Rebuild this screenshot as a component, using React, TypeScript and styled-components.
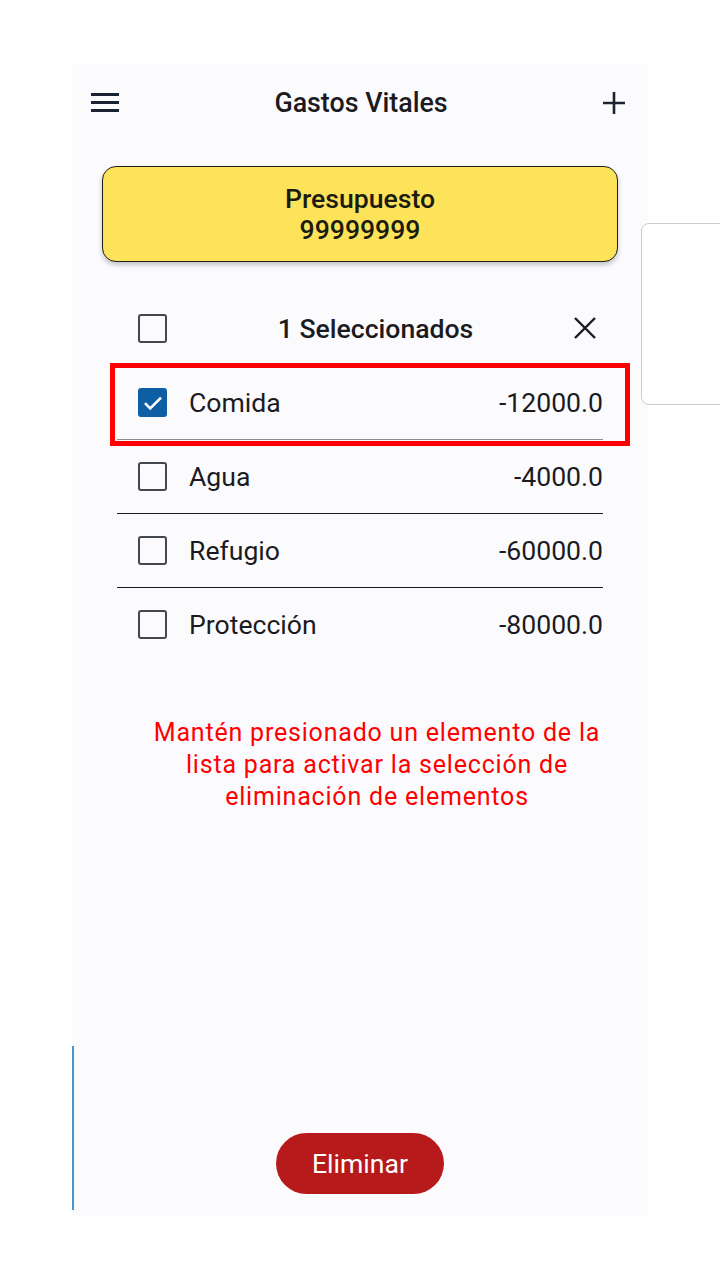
import React, { useState } from 'react';
import styled, { createGlobalStyle } from 'styled-components';

const GlobalStyle = createGlobalStyle`
  html, body {
    margin: 0;
    padding: 0;
    background: #ffffff;
  }
  body {
    font-family: Roboto, "Liberation Sans", sans-serif;
    color: #1b1b1f;
  }
`;

interface Gasto {
  id: number;
  nombre: string;
  monto: string;
}

const GASTOS: Gasto[] = [
  { id: 1, nombre: 'Comida', monto: '-12000.0' },
  { id: 2, nombre: 'Agua', monto: '-4000.0' },
  { id: 3, nombre: 'Refugio', monto: '-60000.0' },
  { id: 4, nombre: 'Protección', monto: '-80000.0' },
];

export default function App() {
  const [selected, setSelected] = useState<number[]>([1]);

  const toggle = (id: number) =>
    setSelected((prev) => (prev.includes(id) ? prev.filter((x) => x !== id) : [...prev, id]));

  return (
    <>
      <GlobalStyle />
      <Page>
        <Screen>
          <TopBar>
            <IconBtn aria-label="menu">
              <svg width="28" height="22" viewBox="0 0 28 22">
                <path d="M0 2.5h28M0 10.5h28M0 18.5h28" stroke="#1a2331" strokeWidth="3" />
              </svg>
            </IconBtn>
            <Title>Gastos Vitales</Title>
            <IconBtn aria-label="agregar">
              <svg width="22" height="22" viewBox="0 0 22 22">
                <path d="M11 0v22M0 11h22" stroke="#1a2331" strokeWidth="2.6" />
              </svg>
            </IconBtn>
          </TopBar>

          <BudgetCard>
            <span>Presupuesto</span>
            <span>99999999</span>
          </BudgetCard>

          <List>
            <SelectionBar>
              <CheckBox checked={false} />
              <SelectionTitle>{selected.length} Seleccionados</SelectionTitle>
              <IconBtn aria-label="cerrar" onClick={() => setSelected([])}>
                <svg width="22" height="22" viewBox="0 0 22 22">
                  <path d="M1 1l20 20M21 1L1 21" stroke="#1b1b1f" strokeWidth="2.4" />
                </svg>
              </IconBtn>
            </SelectionBar>

            {GASTOS.map((g, i) => (
              <Row key={g.id} $divider={i < GASTOS.length - 1} $soft={i === 0} onClick={() => toggle(g.id)}>
                <CheckBox checked={selected.includes(g.id)} />
                <Label>{g.nombre}</Label>
                <Amount>{g.monto}</Amount>
                {i === 0 && <Highlight />}
              </Row>
            ))}
          </List>

          <Hint>
            Mantén presionado un elemento de la
            <br />
            lista para activar la selección de
            <br />
            eliminación de elementos
          </Hint>

          <DeleteButton>Eliminar</DeleteButton>
          <EdgeGlow />
        </Screen>
        <SidePanel />
      </Page>
    </>
  );
}

function CheckBox({ checked }: { checked: boolean }) {
  return (
    <Box $checked={checked}>
      {checked && (
        <svg width="20" height="16" viewBox="0 0 20 16">
          <path d="M2 8.2l5.2 5.2L18 2.6" fill="none" stroke="#ffffff" strokeWidth="2.6" />
        </svg>
      )}
    </Box>
  );
}

const Page = styled.div`
  position: relative;
  width: 720px;
  height: 1280px;
  padding: 64px 0 0 72px;
  box-sizing: border-box;
  overflow: hidden;
`;

const Screen = styled.div`
  position: relative;
  width: 576px;
  height: 1152px;
  background: #fbfbfe;
  display: flex;
  flex-direction: column;
`;

const SidePanel = styled.div`
  position: absolute;
  left: 641px;
  top: 223px;
  width: 120px;
  height: 180px;
  border: 1.5px solid #cdcdd1;
  border-radius: 8px;
  background: #ffffff;
`;

const EdgeGlow = styled.div`
  position: absolute;
  left: 0;
  top: 982px;
  width: 2px;
  height: 164px;
  background: #4d93c9;
`;

const TopBar = styled.header`
  height: 78px;
  display: flex;
  align-items: center;
  justify-content: space-between;
  padding: 0 23px 0 19px;
`;

const IconBtn = styled.button`
  display: flex;
  align-items: center;
  justify-content: center;
  padding: 0;
  border: none;
  background: none;
  cursor: pointer;
`;

const Title = styled.h1`
  margin: 0;
  font-size: 26.8px;
  font-weight: 500;
  color: #1b1b1f;
  letter-spacing: 0;
`;

const BudgetCard = styled.div`
  margin: 24px 0 0 30px;
  width: 516px;
  height: 96px;
  box-sizing: border-box;
  background: #fce35a;
  border: 1.5px solid #1d1d1d;
  border-radius: 14px;
  box-shadow: 0 3px 5px rgba(0, 0, 0, 0.22);
  display: flex;
  flex-direction: column;
  align-items: center;
  justify-content: center;
  font-size: 26.6px;
  font-weight: 500;
  line-height: 31px;
  color: #1b1b10;
`;

const List = styled.div`
  margin: 34px 0 0 45px;
  width: 486px;
`;

const SelectionBar = styled.div`
  height: 70px;
  box-sizing: border-box;
  display: flex;
  align-items: center;
  padding: 0 7px 5px 21px;
  border-bottom: 1px solid #d4d4d8;
`;

const SelectionTitle = styled.span`
  flex: 1;
  text-align: center;
  font-size: 26.6px;
  font-weight: 500;
  padding-left: 10px;
`;

const Row = styled.div<{ $divider: boolean; $soft: boolean }>`
  position: relative;
  height: 73px;
  display: flex;
  align-items: center;
  padding: 0 0 0 21px;
  border-bottom: 1px solid ${({ $divider, $soft }) => ($divider ? ($soft ? '#8e8e92' : '#1b1b1f') : 'transparent')};
  cursor: pointer;
`;

const Box = styled.span<{ $checked: boolean }>`
  width: 29px;
  height: 29px;
  box-sizing: border-box;
  border-radius: 3px;
  border: ${({ $checked }) => ($checked ? 'none' : '2.6px solid #43474e')};
  background: ${({ $checked }) => ($checked ? '#0e5ea6' : 'transparent')};
  display: flex;
  align-items: center;
  justify-content: center;
  flex-shrink: 0;
`;

const Label = styled.span`
  flex: 1;
  margin-left: 22px;
  font-size: 26.6px;
  font-weight: 400;
  color: #1b1b1f;
`;

const Amount = styled.span`
  font-size: 26.6px;
  font-weight: 400;
  color: #1b1b1f;
`;

const Highlight = styled.div`
  position: absolute;
  left: -7px;
  top: -3px;
  right: -27px;
  bottom: -7px;
  border: 5px solid #ff0000;
  pointer-events: none;
`;

const Hint = styled.p`
  margin: 55px 0 0 0;
  padding-left: 34px;
  text-align: center;
  font-size: 25px;
  line-height: 32px;
  letter-spacing: 0.8px;
  color: #ff0000;
`;

const DeleteButton = styled.button`
  align-self: center;
  margin: auto 0 22px 0;
  width: 168px;
  height: 61px;
  border: none;
  border-radius: 31px;
  background: #b71a1a;
  color: #ffffff;
  font-family: Roboto, "Liberation Sans", sans-serif;
  font-size: 26.6px;
  font-weight: 400;
  cursor: pointer;
`;
